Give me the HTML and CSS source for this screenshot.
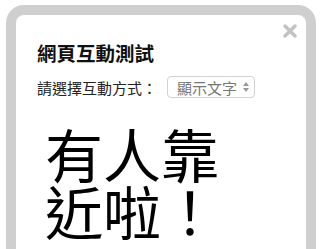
FILE: index.html
```html
<!DOCTYPE html>
<html lang="zh-Hant">
  <head>
    <meta charset="UTF-8" />
    <title>網頁互動測試</title>
    <link rel="stylesheet" href="styles.css">
  </head>
  <body>
    <div class="frame">
      <div class="dialog">
        <svg class="close" width="14" height="14" viewBox="0 0 14 14">
          <path d="M2 2 L12 12 M12 2 L2 12" stroke="#c2c2c2" stroke-width="3.4" stroke-linecap="round" />
        </svg>
        <h1 class="title">網頁互動測試</h1>
        <div class="row">
          <span class="label">請選擇互動方式：</span>
          <span class="select">顯示文字<span class="arrows"><i class="up"></i><i class="down"></i></span></span>
        </div>
        <p class="message">有人靠近啦！</p>
      </div>
    </div>
  </body>
</html>
```

FILE: styles.css
```css
* {
  font-family: "Noto Sans CJK TC", "Noto Sans", sans-serif;
  box-sizing: border-box;
}

body {
  margin: 0;
  background-color: white;
  overflow: hidden;
}

/* 바깥 회색 테두리 */
.frame {
  margin: 5px 7px 0 6px;
  height: 300px;
  border: 10px solid #cfcfcf;
  border-bottom: none;
  border-radius: 18px 18px 0 0;
}

.dialog {
  position: relative;
  padding: 26px 0 0 21px;
}

.close {
  position: absolute;
  top: 9px;
  right: 9px;
}

.title {
  margin: 0;
  font-size: 19.5px;
  font-weight: bold;
  line-height: 24px;
  color: #111;
}

.row {
  display: flex;
  align-items: center;
  margin-top: 11px;
}

.label {
  font-size: 15px;
  color: #222;
}

.select {
  display: flex;
  align-items: center;
  margin-left: 10px;
  height: 22px;
  padding: 0 5px 0 9px;
  border: 1px solid #d2d2d2;
  border-radius: 4px;
  font-size: 15px;
  color: #777;
}

.arrows {
  display: flex;
  flex-direction: column;
  gap: 2px;
  margin-left: 6px;
}

.up, .down {
  width: 0;
  height: 0;
  border-left: 3px solid transparent;
  border-right: 3px solid transparent;
}
.up {
  border-bottom: 4px solid #999;
}
.down {
  border-top: 4px solid #999;
}

.message {
  width: 190px;
  margin: 27px 0 0 8px;
  font-size: 58px;
  line-height: 57px;
  color: #000;
}
```
